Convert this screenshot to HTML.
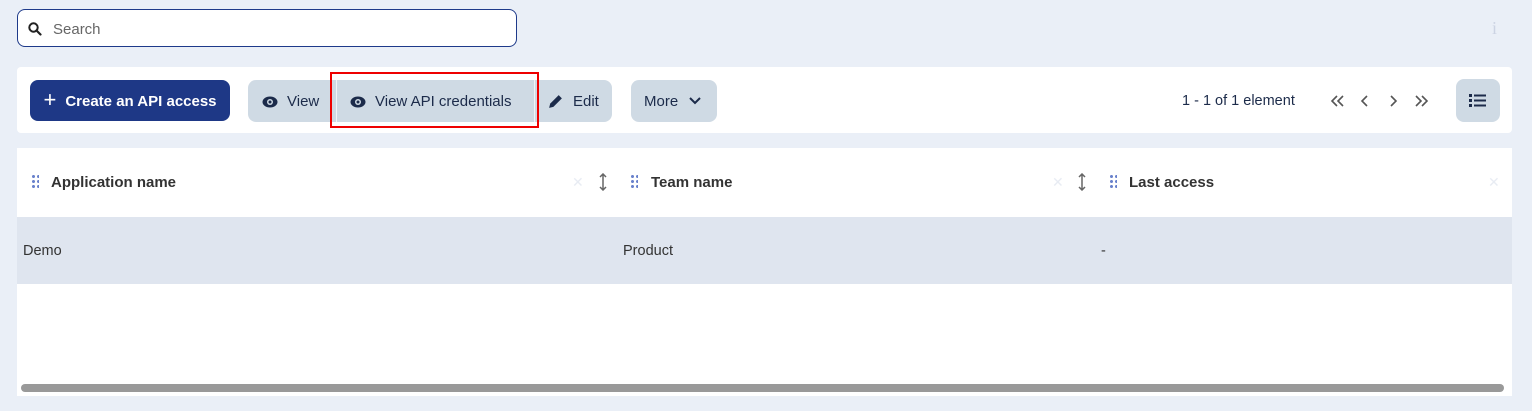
<!DOCTYPE html>
<html><head><style>
body{margin:0;width:1532px;height:411px;background:#eaeff7;font-family:"Liberation Sans",sans-serif;position:relative;overflow:hidden;color:#222}
.a{position:absolute}
.btn{position:absolute;display:flex;align-items:center;font-size:15px;color:#1c2b4a}
.dots{position:absolute;width:8px;height:14px;background:radial-gradient(circle,#6a82cc 1.4px,transparent 1.6px) 0 0/5px 5px}
</style></head><body>
<div class="a" style="left:17px;top:9px;width:498px;height:36px;border:1px solid #1e3a8a;border-radius:8px;background:#fff"></div>
<svg class="a" style="left:28px;top:22px" width="14" height="14" viewBox="0 0 14 14"><circle cx="5.5" cy="5.5" r="4.2" fill="none" stroke="#222" stroke-width="2"/><path d="M8.5 8.5L12.5 12.5" stroke="#222" stroke-width="2.2" stroke-linecap="round"/></svg>
<div class="a" style="left:53px;top:21px;font-size:15px;color:#666">Search</div>
<div class="a" style="left:1492px;top:18px;font-size:18px;color:#ccd3e3;font-family:'Liberation Serif',serif">i</div>

<div class="a" style="left:17px;top:67px;width:1495px;height:66px;background:#fff;border-radius:4px"></div>
<div class="btn" style="left:30px;top:80px;width:200px;height:41px;background:#1e3886;border-radius:8px;color:#fff;font-weight:bold;justify-content:center;padding-top:1px;box-sizing:border-box">
<span style="font-size:22px;font-weight:normal;margin-right:9px;margin-top:-3px">+</span>Create an API access</div>
<div class="a" style="left:248px;top:80px;width:364px;height:42px;background:#cfdae4;border-radius:8px"></div>
<div class="a" style="left:336px;top:80px;width:197px;height:42px;border-left:1px solid #f2f5f8;border-right:1px solid #f2f5f8"></div>
<svg class="a" style="left:262px;top:95px" width="16" height="14" viewBox="0 0 16 14"><ellipse cx="8" cy="7" rx="7.5" ry="5.5" fill="#1c2b4a"/><circle cx="8" cy="7" r="3" fill="#cfdae4"/><circle cx="8" cy="7" r="1.5" fill="#1c2b4a"/></svg>
<div class="btn" style="left:287px;top:93px">View</div>
<svg class="a" style="left:350px;top:95px" width="16" height="14" viewBox="0 0 16 14"><ellipse cx="8" cy="7" rx="7.5" ry="5.5" fill="#1c2b4a"/><circle cx="8" cy="7" r="3" fill="#cfdae4"/><circle cx="8" cy="7" r="1.5" fill="#1c2b4a"/></svg>
<div class="btn" style="left:375px;top:93px">View API credentials</div>
<svg class="a" style="left:547px;top:93px" width="17" height="17" viewBox="0 0 16 16"><path d="M2 14l1-4 8-8 3 3-8 8z" fill="#1c2b4a"/></svg>
<div class="btn" style="left:573px;top:93px">Edit</div>
<div class="a" style="left:330px;top:72px;width:205px;height:52px;border:2px solid #e00"></div>
<div class="a" style="left:631px;top:80px;width:86px;height:42px;background:#cfdae4;border-radius:8px"></div>
<div class="btn" style="left:644px;top:93px">More</div>
<svg class="a" style="left:689px;top:97px" width="12" height="8" viewBox="0 0 12 8"><path d="M1 1l5 5 5-5" fill="none" stroke="#1c2b4a" stroke-width="2"/></svg>
<div class="btn" style="left:1182px;top:93px;font-size:14.5px">1 - 1 of 1 element</div>
<svg class="a" style="left:1330px;top:94px" width="100" height="14" viewBox="0 0 100 14" fill="none" stroke="#555" stroke-width="1.6"><path d="M7 2l-5 5 5 5M13 2l-5 5 5 5M37 2l-5 5 5 5M61 2l5 5-5 5M86 2l5 5-5 5M92 2l5 5-5 5"/></svg>
<div class="a" style="left:1456px;top:79px;width:44px;height:43px;background:#cfdae4;border-radius:8px"></div>
<svg class="a" style="left:1469px;top:94px" width="17" height="13" viewBox="0 0 17 13" fill="#1c2b4a"><rect x="0" y="0" width="3" height="3"/><rect x="5" y="0.5" width="12" height="2"/><rect x="0" y="5" width="3" height="3"/><rect x="5" y="5.5" width="12" height="2"/><rect x="0" y="10" width="3" height="3"/><rect x="5" y="10.5" width="12" height="2"/></svg>

<div class="a" style="left:17px;top:148px;width:1495px;height:248px;background:#fff"></div>
<div class="a" style="left:17px;top:217px;width:1495px;height:67px;background:#dfe5ef"></div>
<div class="dots" style="left:31px;top:174px"></div>
<div class="a" style="left:51px;top:174px;font-size:15px;font-weight:bold;color:#333">Application name</div>
<div class="dots" style="left:630px;top:174px"></div>
<div class="a" style="left:651px;top:174px;font-size:15px;font-weight:bold;color:#333">Team name</div>
<div class="dots" style="left:1109px;top:174px"></div>
<div class="a" style="left:1129px;top:174px;font-size:15px;font-weight:bold;color:#333">Last access</div>
<div class="a" style="left:572px;top:174px;color:#e8ecf3;font-size:14px">✕</div>
<div class="a" style="left:1052px;top:174px;color:#e8ecf3;font-size:14px">✕</div>
<div class="a" style="left:1488px;top:174px;color:#e8ecf3;font-size:14px">✕</div>
<svg class="a" style="left:598px;top:173px" width="10" height="18" viewBox="0 0 10 18" fill="none" stroke="#666" stroke-width="1.5"><path d="M5 1v16M2 4l3-3 3 3M2 14l3 3 3-3"/></svg>
<svg class="a" style="left:1077px;top:173px" width="10" height="18" viewBox="0 0 10 18" fill="none" stroke="#666" stroke-width="1.5"><path d="M5 1v16M2 4l3-3 3 3M2 14l3 3 3-3"/></svg>
<div class="a" style="left:23px;top:243px;font-size:14.5px;color:#333">Demo</div>
<div class="a" style="left:623px;top:243px;font-size:14.5px;color:#333">Product</div>
<div class="a" style="left:1101px;top:243px;font-size:14.5px;color:#333">-</div>
<div class="a" style="left:21px;top:384px;width:1483px;height:8px;background:#999;border-radius:4px"></div>
</body></html>
